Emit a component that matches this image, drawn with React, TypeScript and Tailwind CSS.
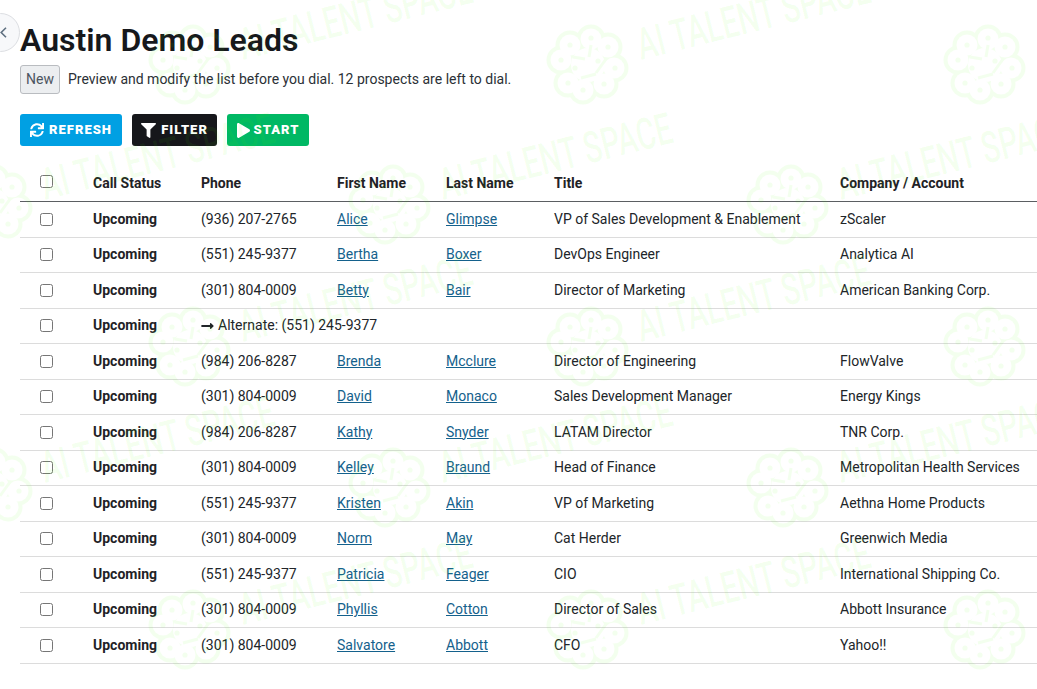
import { FaSync, FaFilter, FaPlay, FaLongArrowAltRight } from "react-icons/fa";

type Row = { phone: string; first: string; last: string; title: string; company: string; alt?: boolean };

const rows: Row[] = [
  { phone: "(936) 207-2765", first: "Alice", last: "Glimpse", title: "VP of Sales Development & Enablement", company: "zScaler" },
  { phone: "(551) 245-9377", first: "Bertha", last: "Boxer", title: "DevOps Engineer", company: "Analytica AI" },
  { phone: "(301) 804-0009", first: "Betty", last: "Bair", title: "Director of Marketing", company: "American Banking Corp." },
  { phone: "Alternate: (551) 245-9377", first: "", last: "", title: "", company: "", alt: true },
  { phone: "(984) 206-8287", first: "Brenda", last: "Mcclure", title: "Director of Engineering", company: "FlowValve" },
  { phone: "(301) 804-0009", first: "David", last: "Monaco", title: "Sales Development Manager", company: "Energy Kings" },
  { phone: "(984) 206-8287", first: "Kathy", last: "Snyder", title: "LATAM Director", company: "TNR Corp." },
  { phone: "(301) 804-0009", first: "Kelley", last: "Braund", title: "Head of Finance", company: "Metropolitan Health Services" },
  { phone: "(551) 245-9377", first: "Kristen", last: "Akin", title: "VP of Marketing", company: "Aethna Home Products" },
  { phone: "(301) 804-0009", first: "Norm", last: "May", title: "Cat Herder", company: "Greenwich Media" },
  { phone: "(551) 245-9377", first: "Patricia", last: "Feager", title: "CIO", company: "International Shipping Co." },
  { phone: "(301) 804-0009", first: "Phyllis", last: "Cotton", title: "Director of Sales", company: "Abbott Insurance" },
  { phone: "(301) 804-0009", first: "Salvatore", last: "Abbott", title: "CFO", company: "Yahoo!!" },
];

const lobes = [
  [-18, -20], [3, -26], [20, -18], [26, 3], [16, 19], [-5, 25], [-20, 18], [-27, -5],
];
const dots = [
  [-18, -20], [3, -27], [20, -18], [27, 3], [16, 19], [-5, 25], [-20, 18], [-27, -5], [-13, 3], [10, -4],
];

const marks = [
  [190, 65], [588, 65], [985, 65],
  [-8, 205], [390, 205], [788, 205],
  [190, 347], [588, 347], [985, 347],
  [-8, 488], [390, 488], [788, 488],
  [190, 630], [588, 630], [985, 630],
];

function Watermark() {
  return (
    <svg className="absolute left-0 top-0 z-30 pointer-events-none" width="1037" height="689" viewBox="0 0 1037 689">
      <defs>
        <mask id="brain" maskUnits="userSpaceOnUse" x="-50" y="-50" width="100" height="100">
          {lobes.map(([a, b], j) => (
            <circle key={j} cx={a} cy={b} r="14.5" fill="#ffffff" />
          ))}
          <circle cx="0" cy="0" r="20" fill="#ffffff" />
          {lobes.map(([a, b], j) => (
            <circle key={j} cx={a} cy={b} r="10.5" fill="#000000" />
          ))}
          <circle cx="0" cy="0" r="17" fill="#000000" />
          {dots.map(([a, b], j) => (
            <circle key={j} cx={a} cy={b} r="2.6" fill="#ffffff" />
          ))}
          <path d="M-15 -8 L-3 -6 M3 -20 L1 -8 M-7 13 L8 9 M18 -6 L8 8" fill="none" stroke="#ffffff" strokeWidth="3" />
        </mask>
      </defs>
      {marks.map(([x, y], i) => (
        <g key={i} transform={`translate(${x} ${y})`} fill="#52ff00" fillOpacity="0.065">
          <rect x="-50" y="-50" width="100" height="100" mask="url(#brain)" />
          <text
            x="53"
            y="-5"
            transform="rotate(-14 53 -5)"
            textLength="239"
            lengthAdjust="spacingAndGlyphs"
            fontFamily="Roboto, sans-serif"
            fontWeight="500"
            fontSize="44"
          >
            AI TALENT SPACE
          </text>
        </g>
      ))}
    </svg>
  );
}

const td = "pl-2 align-middle";

export default function App() {
  return (
    <div className="relative w-[1037px] h-[689px] overflow-hidden bg-white text-[14px] text-[#212529] font-['Roboto',sans-serif]">
      <Watermark />
      <div className="absolute left-[-19px] top-[13px] z-20 flex h-[39px] w-[39px] items-center justify-start rounded-full border border-[#dcdee2] bg-[#f7f8fa] pl-[18px] text-[#5f7080]">
        <svg width="7" height="11" viewBox="0 0 7 11" fill="none" stroke="currentColor" strokeWidth="1.6">
          <path d="M6 0.8 L1.2 5.5 L6 10.2" />
        </svg>
      </div>
      <div className="relative z-10 pl-5 pt-[20px]">
        <h1 className="text-[32px] font-semibold leading-[40px] text-[#16181c]">Austin Demo Leads</h1>
        <div className="mt-[5px] flex items-center gap-2">
          <span className="flex h-[29px] w-[40px] items-center justify-center rounded-[3px] border border-[#b9bcc0] bg-[#eceef0] text-[#4c5560]">New</span>
          <span className="text-[#2b3036]">Preview and modify the list before you dial. 12 prospects are left to dial.</span>
        </div>
        <div className="mt-[20px] flex gap-[10px]">
          <button className="flex h-[32px] w-[102px] items-center justify-center gap-[5px] rounded-[3px] bg-[#00a0e3] text-[13px] font-black uppercase tracking-[1px] text-white">
            <FaSync className="h-[14px] w-[14px]" /> Refresh
          </button>
          <button className="flex h-[32px] w-[85px] items-center justify-center gap-[5px] rounded-[3px] bg-[#16171b] text-[13px] font-black uppercase tracking-[1px] text-white">
            <FaFilter className="h-[15px] w-[15px]" /> Filter
          </button>
          <button className="flex h-[32px] w-[82px] items-center justify-center gap-[4px] rounded-[3px] bg-[#00b864] text-[13px] font-black uppercase tracking-[1px] text-white">
            <FaPlay className="h-[15px] w-[13px]" /> Start
          </button>
        </div>
        <table className="mt-[19px] w-[1017px] table-fixed border-collapse">
          <colgroup>
            <col className="w-[65px]" />
            <col className="w-[108px]" />
            <col className="w-[136px]" />
            <col className="w-[109px]" />
            <col className="w-[108px]" />
            <col className="w-[286px]" />
            <col className="w-[205px]" />
          </colgroup>
          <thead>
            <tr className="h-[36.5px] border-b border-[#5b5e62]">
              <th className="pl-5 pb-[3px] text-left align-middle">
                <input type="checkbox" className="m-0 block h-[13px] w-[13px]" />
              </th>
              {["Call Status", "Phone", "First Name", "Last Name", "Title", "Company / Account"].map((h) => (
                <th key={h} className={`${td} text-left font-bold text-[#1f2226]`}>{h}</th>
              ))}
            </tr>
          </thead>
          <tbody>
            {rows.map((r, i) => (
              <tr key={i} className="h-[35.5px] border-b border-[#dcdcdc]">
                <td className="pl-5 align-middle">
                  <input type="checkbox" className="m-0 block h-[13px] w-[13px]" />
                </td>
                <td className={`${td} font-bold text-[#1f2226]`}>Upcoming</td>
                {r.alt ? (
                  <td colSpan={5} className={td}>
                    <span className="flex items-center gap-[4px]">
                      <FaLongArrowAltRight className="h-[14px] w-[13px] text-[#212529]" />
                      {r.phone}
                    </span>
                  </td>
                ) : (
                  <>
                    <td className={td}>{r.phone}</td>
                    <td className={td}><a href="#" className="text-[#14618c] underline">{r.first}</a></td>
                    <td className={td}><a href="#" className="text-[#14618c] underline">{r.last}</a></td>
                    <td className={td}>{r.title}</td>
                    <td className={td}>{r.company}</td>
                  </>
                )}
              </tr>
            ))}
          </tbody>
        </table>
      </div>
    </div>
  );
}
